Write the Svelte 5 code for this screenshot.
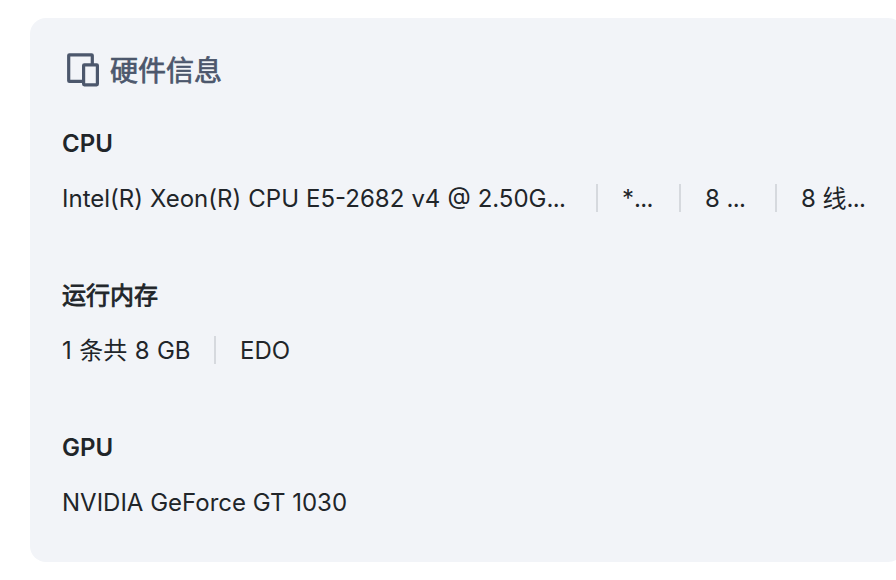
<script>
  const sections = [
    {
      title: "CPU",
      items: [
        { text: "Intel(R) Xeon(R) CPU E5-2682 v4 @ 2.50G", cut: true, width: 536, wordSpacing: 0.3 },
        { text: "*", cut: true, width: 83 },
        { text: "8 ", cut: true, width: 96 },
        { text: "8 线", cut: true }
      ]
    },
    {
      title: "运行内存",
      cjk: true,
      items: [{ text: "1 条共 8 GB", width: 154, wordSpacing: 0.7 }, { text: "EDO" }]
    },
    {
      title: "GPU",
      items: [{ text: "NVIDIA GeForce GT 1030" }]
    }
  ];
</script>

<div class="page">
  <div class="card">
    <header>
      <svg width="34" height="36" viewBox="0 0 34 36">
        <path
          d="M16.5 29.4 H3.4 Q2.7 29.4 2.7 28.7 V3.6 Q2.7 2.9 3.4 2.9 H25.6 Q26.3 2.9 26.3 3.6 V12" />
        <rect x="17.6" y="12.9" width="13.8" height="19.9" rx="0.7" />
      </svg>
      <h2>硬件信息</h2>
    </header>
    {#each sections as section}
      <section>
        <h3 class:cjk={section.cjk}>{section.title}</h3>
        <div class="row">
          {#each section.items as item}
            <div
              class="item"
              style:width={item.width ? `${item.width}px` : null}
              style:word-spacing={item.wordSpacing ? `${item.wordSpacing}px` : null}>
              {item.text}{#if item.cut}<span class="dots">...</span>{/if}
            </div>
          {/each}
        </div>
      </section>
    {/each}
  </div>
</div>

<style>
  :global(body) {
    margin: 0;
    background: #fff;
    overflow: hidden;
  }

  .page {
    width: 896px;
    height: 580px;
    padding: 18px 0 0 30px;
    box-sizing: border-box;
    overflow: hidden;
    font-family: Inter, "Noto Sans CJK SC", sans-serif;
    color: #212529;
  }

  .card {
    width: 874px;
    height: 544px;
    padding: 32px;
    box-sizing: border-box;
    border-radius: 16px;
    background: #f2f4f8;
  }

  header {
    display: flex;
    align-items: center;
    height: 40px;
    padding-left: 4px;
    margin-bottom: 34px;
    color: #4c576c;
  }

  header svg {
    flex: none;
    fill: none;
    stroke: currentColor;
    stroke-width: 3.2;
  }

  h2 {
    margin: 2px 0 0 10px;
    font-size: 28px;
    line-height: 40px;
    font-weight: 400;
    -webkit-text-stroke: 0.7px currentColor;
  }

  section {
    height: 152px;
  }

  h3 {
    margin: 0;
    font-size: 24px;
    line-height: 39px;
    font-weight: 600;
  }

  /* regular glyphs thickened a little, the bold cut is too heavy here */
  h3.cjk {
    font-weight: 400;
    -webkit-text-stroke: 0.8px currentColor;
  }

  .row {
    display: flex;
    align-items: center;
    height: 28px;
    margin-top: 21px;
    font-size: 24px;
    line-height: 30px;
    white-space: nowrap;
  }

  .item {
    flex: none;
    height: 28px;
    box-sizing: border-box;
  }

  .item:not(:last-child) {
    border-right: 2px solid #d6d9de;
  }

  .item + .item {
    padding-left: 24px;
  }

  .dots {
    letter-spacing: -0.7px;
  }
</style>
